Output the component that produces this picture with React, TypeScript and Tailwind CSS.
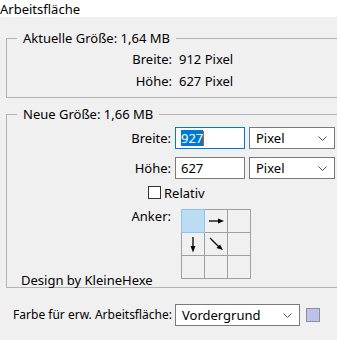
import React from "react";

const Chevron = () => (
  <svg width="9" height="5" viewBox="0 0 9 5" className="shrink-0">
    <polyline points="0.5,0.5 4.5,4.5 8.5,0.5" fill="none" stroke="#555" strokeWidth="1" />
  </svg>
);

const Select = ({ value, w }: { value: string; w: string }) => (
  <div className={`${w} h-[22px] bg-white border border-[#7a7a7a] flex items-center justify-between pl-[6px] pr-[7px] text-[13px] leading-[16px] text-black`}>
    <span>{value}</span>
    <Chevron />
  </div>
);

const ArrowRight = () => (
  <svg width="22" height="22" viewBox="0 0 22 22">
    <line x1="4" y1="11" x2="14" y2="11" stroke="#000" strokeWidth="1.3" />
    <polygon points="13,8.6 19,11 13,13.4" fill="#000" />
  </svg>
);

const ArrowDown = () => (
  <svg width="22" height="22" viewBox="0 0 22 22">
    <line x1="11" y1="4" x2="11" y2="14" stroke="#000" strokeWidth="1.3" />
    <polygon points="8.6,13 11,19.5 13.4,13" fill="#000" />
  </svg>
);

const ArrowDiag = () => (
  <svg width="22" height="22" viewBox="0 0 22 22">
    <line x1="5" y1="5" x2="14" y2="14" stroke="#000" strokeWidth="1.2" />
    <polygon points="18,17 11.5,15 15,11.5" fill="#000" />
  </svg>
);

export default function App() {
  const cells = [0, 1, 2, 3, 4, 5, 6, 7, 8];
  return (
    <div className="w-[337px] h-[340px] overflow-hidden bg-[#f0f0f0] text-[13px] leading-[14px] text-black" style={{ fontFamily: '"Noto Sans", "Liberation Sans", sans-serif' }}>
      {/* Titel */}
      <div className="h-[17px] bg-white flex items-center">Arbeitsfläche</div>

      {/* Aktuelle Größe */}
      <fieldset className="mt-[14px] ml-[6px] w-[340px] border border-[#b4b4b4] pt-[3px] pb-[5px]">
        <legend className="ml-[10px] px-[6px] leading-[14px]">Aktuelle Größe: 1,64 MB</legend>
        <div className="flex h-[22px] items-center">
          <span className="w-[165px] text-right">Breite:</span>
          <span className="ml-[7px]">912 Pixel</span>
        </div>
        <div className="flex h-[22px] items-center">
          <span className="w-[165px] text-right">Höhe:</span>
          <span className="ml-[7px]">627 Pixel</span>
        </div>
      </fieldset>

      {/* Neue Größe */}
      <fieldset className="mt-[9px] ml-[6px] w-[340px] border border-[#b4b4b4] pt-[6px]">
        <legend className="ml-[10px] px-[6px] leading-[14px]">Neue Größe: 1,66 MB</legend>
        <div className="flex items-center">
          <span className="w-[164px] text-right">Breite:</span>
          <div className="ml-[4px] w-[70px] h-[22px] bg-white border border-[#0078d7] flex items-center pl-[5px]">
            <span className="bg-[#0078d7] text-white leading-[16px]">927</span>
            <span className="w-px h-[15px] bg-[#c85a00]" />
          </div>
          <div className="ml-[4px]">
            <Select value="Pixel" w="w-[86px]" />
          </div>
        </div>
        <div className="flex items-center mt-[8px]">
          <span className="w-[164px] text-right">Höhe:</span>
          <div className="ml-[4px] w-[70px] h-[22px] bg-white border border-[#7a7a7a] flex items-center pl-[5px] leading-[16px]">
            627
          </div>
          <div className="ml-[4px]">
            <Select value="Pixel" w="w-[86px]" />
          </div>
        </div>
        <div className="flex items-center mt-[6px] ml-[141px] h-[15px]">
          <span className="w-[13px] h-[13px] border border-[#333] bg-white" />
          <span className="ml-[3px] leading-[16px]">Relativ</span>
        </div>
        <div className="flex items-start mt-[9px]">
          <div className="w-[164px] h-[78px] flex flex-col justify-between">
            <span className="self-end">Anker:</span>
            <span className="ml-[14px]">Design by KleineHexe</span>
          </div>
          <div className="ml-[10px] grid grid-cols-3 gap-px bg-[#a0a0a0] p-px w-[70px]">
            {cells.map((i) => (
              <div
                key={i}
                className={
                  i === 0
                    ? "h-[22px] bg-[#bcdcf4] ring-1 ring-[#90c4ee]"
                    : "h-[22px] bg-[#f0f0f0] flex items-center justify-center"
                }
              >
                {i === 1 && <ArrowRight />}
                {i === 3 && <ArrowDown />}
                {i === 4 && <ArrowDiag />}
              </div>
            ))}
          </div>
        </div>
      </fieldset>

      {/* Farbe */}
      <div className="flex items-center mt-[16px]">
        <span className="w-[172px] text-right text-[12px]">Farbe für erw. Arbeitsfläche:</span>
        <div className="ml-[3px]">
          <Select value="Vordergrund" w="w-[125px]" />
        </div>
        <span className="ml-[6px] w-[14px] h-[14px] bg-[#bcc2ea] border border-[#8c8c9c]" />
      </div>
    </div>
  );
}
